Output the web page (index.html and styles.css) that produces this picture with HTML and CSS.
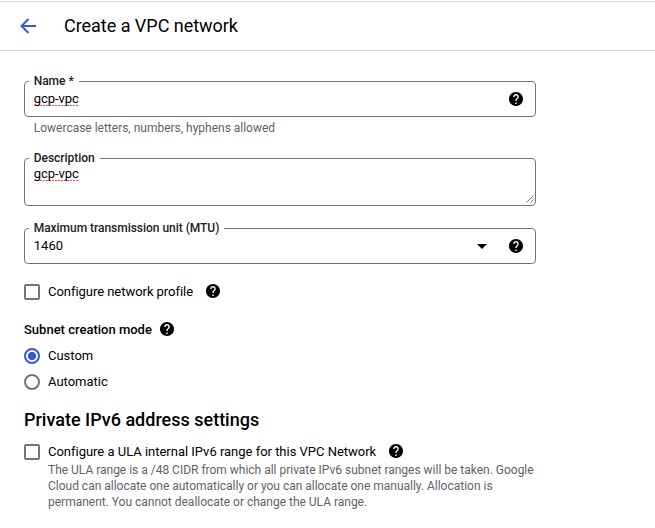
FILE: index.html
```html
<!DOCTYPE html>
<html lang="en">
<head>
<meta charset="utf-8">
<title>Create a VPC network</title>
<link rel="stylesheet" href="styles.css">
</head>
<body>
<svg class="defs" aria-hidden="true">
  <symbol id="help" viewBox="2 2 20 20"><path d="M12 2C6.480 2 2 6.480 2 12s4.480 10 10 10 10-4.480 10-10S17.520 2 12 2zm1 17h-2v-2h2v2zm2.070-7.750l-.9.920C13.450 12.900 13 13.500 13 15h-2v-.5c0-1.100.45-2.100 1.170-2.830l1.240-1.260c.37-.36.59-.86.59-1.410 0-1.100-.9-2-2-2s-2 .9-2 2H8c0-2.210 1.790-4 4-4s4 1.790 4 4c0 .88-.36 1.680-.93 2.250z"/></symbol>
</svg>
<header class="toolbar">
  <svg class="back" viewBox="0 0 16 16"><path d="M16 8H1.500M8.500 1L1.500 8l7 7"/></svg>
  <h1>Create a VPC network</h1>
</header>
<main class="form">
  <div class="field">
    <label class="field-label">Name *</label>
    <span class="value misspelled">gcp-vpc</span>
    <svg class="help"><use href="#help"/></svg>
  </div>
  <p class="hint">Lowercase letters, numbers, hyphens allowed</p>
  <div class="field area">
    <label class="field-label">Description</label>
    <span class="value misspelled">gcp-vpc</span>
    <svg class="grip" viewBox="0 0 8 8"><path d="M0.500 7.500l7-7M4.500 7.500l3-3"/></svg>
  </div>
  <div class="field select">
    <label class="field-label">Maximum transmission unit (MTU)</label>
    <span class="value">1460</span>
    <svg class="arrow" viewBox="0 0 10 5"><path d="M0 0h10L5 5z"/></svg>
    <svg class="help"><use href="#help"/></svg>
  </div>
  <div class="option profile">
    <span class="checkbox"></span>
    <span class="text">Configure network profile</span>
    <svg class="help"><use href="#help"/></svg>
  </div>
  <div class="group-title">
    <span>Subnet creation mode</span>
    <svg class="help"><use href="#help"/></svg>
  </div>
  <div class="option custom"><span class="radio checked"></span><span class="text">Custom</span></div>
  <div class="option automatic"><span class="radio"></span><span class="text">Automatic</span></div>
  <h2>Private IPv6 address settings</h2>
  <div class="option ula">
    <span class="checkbox"></span>
    <span class="text">Configure a ULA internal IPv6 range for this VPC Network</span>
    <svg class="help"><use href="#help"/></svg>
  </div>
  <p class="details">The ULA range is a /48 CIDR from which all private IPv6 subnet ranges will be taken. Google<br>Cloud can allocate one automatically or you can allocate one manually. Allocation is<br>permanent. You cannot deallocate or change the ULA range.</p>
</main>
</body>
</html>
```
FILE: styles.css
```css
* { box-sizing: border-box; }
body {
  margin: 0;
  height: 528px;
  overflow: hidden;
  background: #fff;
  color: #000;
  font: 13px/20px Roboto, sans-serif;
  white-space: nowrap;
}
h1, h2, p { margin: 0; }
svg { flex: none; display: block; }
.defs { position: absolute; width: 0; height: 0; }
.toolbar {
  display: flex;
  align-items: center;
  height: 50px;
  margin-top: 1px;
  padding-left: 20px;
  border-top: 1px solid #dadce0;
  border-bottom: 1px solid #dadce0;
}
.back {
  width: 16px;
  height: 16px;
  fill: none;
  stroke: #345cd6;
  stroke-width: 2;
}
h1 {
  margin-left: 28px;
  font-size: 18px;
  font-weight: 400;
  line-height: 24px;
  letter-spacing: -0.03px;
}
.form { width: 536px; padding: 30px 0 0 24px; }
.field {
  position: relative;
  display: flex;
  align-items: center;
  height: 36px;
  padding: 0 12px 0 8.8px;
  border: 1px solid #70757a;
  border-radius: 4px;
}
.field-label {
  position: absolute;
  top: -11px;
  left: 4px;
  padding: 0 5px 0 4.700px;
  background: #fff;
  color: #202124;
  font-size: 12px;
  font-weight: 500;
  line-height: 20px;
  letter-spacing: -0.03px;
}
.value { flex: 1; }
.misspelled {
  flex: none;
  margin-right: auto;
  line-height: 16px;
  letter-spacing: -0.05px;
  background: repeating-linear-gradient(90deg, #f55 0 2px, #fdd 2px 3px) 0 14px / 100% 1px no-repeat;
}
.help { width: 14px; height: 14px; fill: #000; }
.hint {
  padding: 1px 0 0 9.8px;
  color: #5f6368;
  font-size: 12px;
  letter-spacing: -0.01px;
}
.area { align-items: flex-start; height: 48px; margin-top: 20px; padding-top: 7px; }
.grip {
  position: absolute;
  right: 1px;
  bottom: 2px;
  width: 8px;
  height: 8px;
  fill: none;
  stroke: #555;
  stroke-width: 0.8;
}
.select { margin-top: 22px; }
.arrow { width: 10px; height: 5px; margin-right: 22px; }
.option { display: flex; align-items: center; height: 20px; }
.checkbox, .radio {
  width: 16px;
  height: 16px;
  border: 2px solid #757575;
  border-radius: 2px;
}
.radio { border-radius: 50%; }
.checked {
  border-color: #345cd6;
  background: radial-gradient(circle, #345cd6 0 3.8px, transparent 4.4px);
}
.text { margin-left: 8px; letter-spacing: -0.015px; }
.profile .text { letter-spacing: -0.04px; }
.option .help { margin: 0 0 2px 13px; }
.profile { margin-top: 18px; }
.group-title {
  display: flex;
  align-items: center;
  height: 20px;
  margin-top: 18px;
  font-weight: 500;
}
.group-title .help { margin: 0 0 2px 8px; }
.custom { margin-top: 6px; }
.automatic { margin-top: 6px; }
h2 {
  margin-top: 16px;
  font-size: 18px;
  font-weight: 500;
  line-height: 24px;
}
.ula { margin-top: 10px; }
.details {
  padding-left: 24px;
  color: #5f6368;
  font-size: 12px;
  line-height: 16px;
  letter-spacing: -0.01px;
}
```
